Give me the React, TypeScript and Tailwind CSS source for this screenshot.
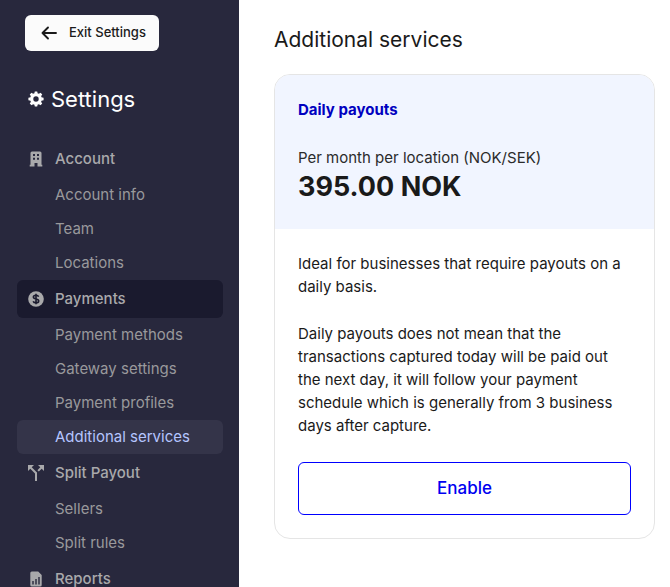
import React from 'react';
import { MdCallSplit } from 'react-icons/md';

const GearIcon = () => (
  <svg viewBox="0 0 16 16" className="size-4 shrink-0" aria-hidden="true">
    <circle cx="8" cy="8" r="4.3" fill="none" stroke="currentColor" strokeWidth="3.2" />
    {[0, 45, 90, 135, 180, 225, 270, 315].map((a) => (
      <path key={a} d="M6.3 2.8 6.8.4h2.4l.5 2.4z" fill="currentColor" transform={`rotate(${a} 8 8)`} />
    ))}
  </svg>
);

const BuildingIcon = () => (
  <svg viewBox="0 0 16 16" className="size-4" fill="currentColor" fillRule="evenodd" aria-hidden="true">
    <path d="M4 .5h8A1.5 1.5 0 0 1 13.5 2v11.8h.8v1.7H9.5V12h-3v3.5H1.700v-1.7h.8V2A1.5 1.5 0 0 1 4 .5zM5 3v2h2V3zm4 0v2h2V3zM5 6.8v2h2v-2zm4 0v2h2v-2z" />
  </svg>
);

const DollarIcon = () => (
  <svg viewBox="0 0 16 16" className="size-4" aria-hidden="true">
    <circle cx="8" cy="8" r="7.8" fill="currentColor" />
    <path
      d="M10.6 5.7C10.3 4.8 9.3 4.3 8 4.3c-1.5 0-2.6.7-2.6 1.8 0 2.7 5.3 1.2 5.3 3.9 0 1.1-1.1 1.8-2.7 1.8-1.4 0-2.5-.6-2.8-1.6M8 2.7v10.6"
      fill="none"
      stroke="#1a1a2e"
      strokeWidth="1.6"
    />
  </svg>
);

const ReportIcon = () => (
  <svg viewBox="0 0 16 16" className="size-4" aria-hidden="true">
    <path d="M3.8.5h6.4L13.7 4v10a1.5 1.5 0 0 1-1.5 1.5H3.800A1.5 1.5 0 0 1 2.3 14V2A1.5 1.5 0 0 1 3.8.5z" fill="currentColor" />
    <path d="M5 10v3.500M8 8v5.500M11 6v7.500" stroke="#28283d" strokeWidth="1.4" />
  </svg>
);

const MENU = [
  { title: 'Account', icon: <BuildingIcon />, items: ['Account info', 'Team', 'Locations'] },
  {
    title: 'Payments',
    icon: <DollarIcon />,
    items: ['Payment methods', 'Gateway settings', 'Payment profiles', 'Additional services'],
  },
  { title: 'Split Payout', icon: <MdCallSplit className="size-6" />, items: ['Sellers', 'Split rules'] },
  { title: 'Reports', icon: <ReportIcon />, items: [] },
];

function Sidebar({ section, page }: { section: string; page: string }) {
  return (
    <aside className="h-full w-[239px] shrink-0 overflow-hidden bg-[#28283d] px-4 pt-[15px]">
      <button className="ml-[9px] flex h-9 items-center rounded-md bg-[#fbfbfb] pr-[13px] pl-4 text-[13px] font-medium text-[#1a1a1a]">
        <svg viewBox="0 0 16 16" className="mr-3 size-4" fill="none" stroke="currentColor" strokeWidth="1.9" strokeLinecap="round" strokeLinejoin="round" aria-hidden="true">
          <path d="M15 8H1.5M7 2.5 1.5 8 7 13.5" />
        </svg>
        Exit Settings
      </button>
      <h1 className="mt-8 mb-[25px] ml-3 flex h-8 items-center gap-[7px] text-[22px] text-white">
        <GearIcon />
        Settings
      </h1>
      <nav>
        {MENU.map((group) => (
          <div key={group.title}>
            <a
              href="#"
              className={`ml-px flex h-[38px] items-center rounded-md text-[15px] font-medium text-[#a9a9ab] ${
                group.title === section ? 'bg-[#1a1a2e]' : ''
              }`}
            >
              <span className="flex w-[38px] justify-center">{group.icon}</span>
              {group.title}
            </a>
            {group.items.map((item) => (
              <a
                key={item}
                href="#"
                className={`ml-px flex h-[34px] items-center rounded-md pl-[38px] text-[15px] ${
                  item === page ? 'bg-[#343449] text-[#b4c5ff]' : 'text-[#99999c]'
                }`}
              >
                {item}
              </a>
            ))}
          </div>
        ))}
      </nav>
    </aside>
  );
}

export default function App() {
  return (
    <div className="flex h-screen bg-white font-[Inter,'Liberation_Sans',sans-serif] text-[#1a1a1a]">
      <Sidebar section="Payments" page="Additional services" />
      <main className="min-w-0 flex-1 overflow-auto pt-6 pr-[15px] pl-[35px]">
        <h2 className="text-[21px] leading-8">Additional services</h2>
        <section className="mt-[18px] overflow-hidden rounded-2xl border border-[#e5e5e5]">
          <header className="bg-[#f1f5ff] px-[23px] pt-[23px] pb-6">
            <h3 className="text-[15px] leading-6 font-bold text-[#0000c0]">Daily payouts</h3>
            <p className="mt-6 text-[15px] leading-[23px] text-[#2b2b2b]">Per month per location (NOK/SEK)</p>
            <p className="text-[27px] leading-9 font-bold">395.00 NOK</p>
          </header>
          <div className="px-[23px] pt-[23px] pb-[23px]">
            <p className="text-[15px] leading-[23px]">Ideal for businesses that require payouts on a daily basis.</p>
            <p className="mt-6 text-[15px] leading-[23px]">
              Daily payouts does not mean that the transactions captured today will be paid out the next day, it will
              follow your payment schedule which is generally from 3 business days after capture.
            </p>
            <button className="mt-[25px] h-[53px] w-full rounded-md border border-[#0000ff] text-[17px] font-medium text-[#0000f0]">
              Enable
            </button>
          </div>
        </section>
      </main>
    </div>
  );
}
